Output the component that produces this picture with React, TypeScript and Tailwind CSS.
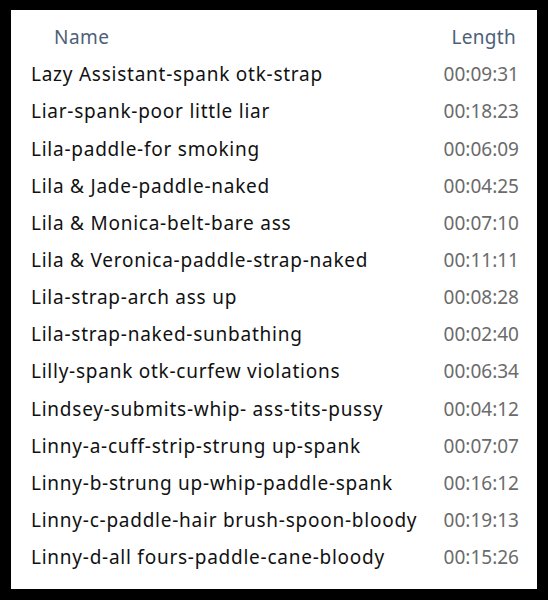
const rows: [string, string][] = [
  ["Lazy Assistant-spank otk-strap", "00:09:31"],
  ["Liar-spank-poor little liar", "00:18:23"],
  ["Lila-paddle-for smoking", "00:06:09"],
  ["Lila & Jade-paddle-naked", "00:04:25"],
  ["Lila & Monica-belt-bare ass", "00:07:10"],
  ["Lila & Veronica-paddle-strap-naked", "00:11:11"],
  ["Lila-strap-arch ass up", "00:08:28"],
  ["Lila-strap-naked-sunbathing", "00:02:40"],
  ["Lilly-spank otk-curfew violations", "00:06:34"],
  ["Lindsey-submits-whip- ass-tits-pussy", "00:04:12"],
  ["Linny-a-cuff-strip-strung up-spank", "00:07:07"],
  ["Linny-b-strung up-whip-paddle-spank", "00:16:12"],
  ["Linny-c-paddle-hair brush-spoon-bloody", "00:19:13"],
  ["Linny-d-all fours-paddle-cane-bloody", "00:15:26"],
];

export default function App() {
  return (
    <div className="h-[600px] w-[548px] bg-black pl-[11px] pt-[10px] font-['Noto_Sans',sans-serif]">
      <div className="flex h-[579px] w-[526px] flex-col bg-white">
        <div className="flex h-[46px] items-center justify-between pl-[43px] pr-[21px] pt-[8px] text-[19px] text-[#4d6078]">
          <span className="tracking-[0.5px]">Name</span>
          <span className="tracking-[0.3px]">Length</span>
        </div>
        {rows.map(([name, len]) => (
          <div
            key={name}
            className="flex h-[37.15px] items-center justify-between pl-[20px] pr-[18px] text-[19px]"
          >
            <span className="tracking-[0.75px] text-[#111]">{name}</span>
            <span className="text-[#6b6b6b]">{len}</span>
          </div>
        ))}
      </div>
    </div>
  );
}
